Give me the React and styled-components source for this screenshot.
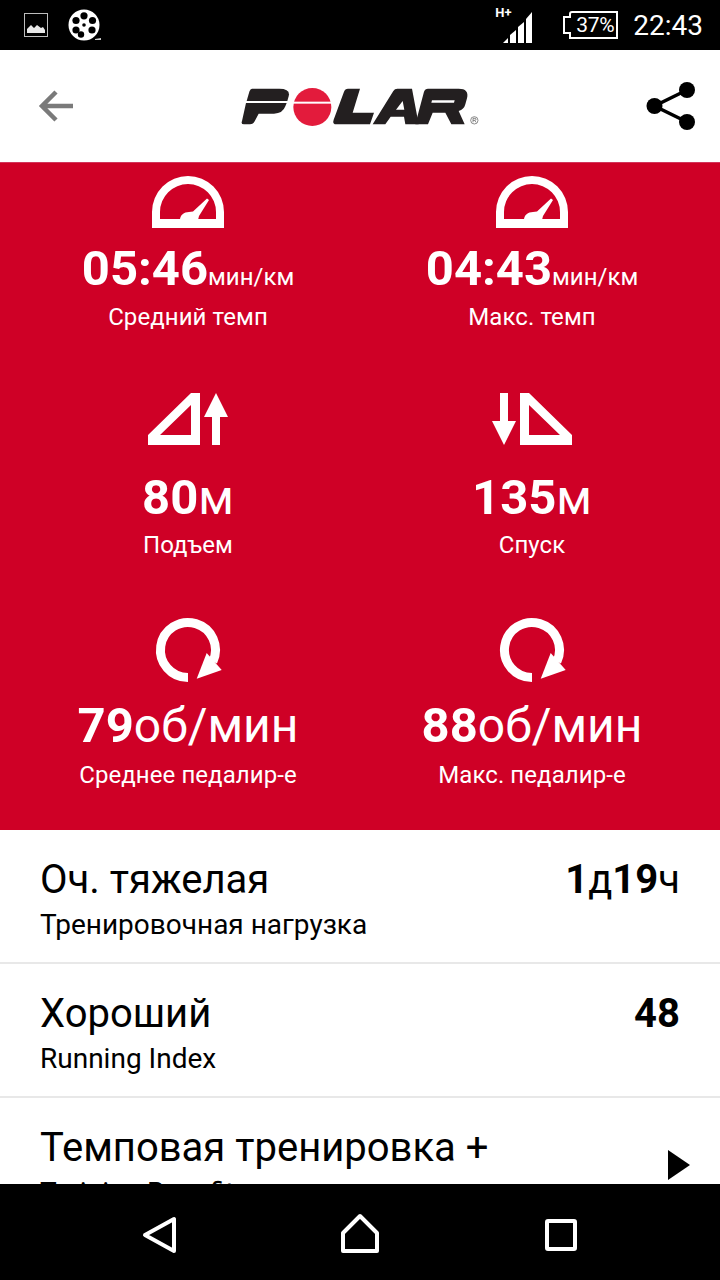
import React from "react";
import styled, { createGlobalStyle } from "styled-components";

const Global = createGlobalStyle`
  html, body { margin: 0; padding: 0; background: #fff; }
  * { box-sizing: border-box; }
`;
const Screen = styled.div`
  width: 720px; height: 1280px; display: flex; flex-direction: column;
  overflow: hidden; font-family: Roboto, "Noto Sans", sans-serif; background: #fff;
`;
const StatusBar = styled.div`
  height: 50px; flex: none; background: #000; color: #fff; display: flex; align-items: center;
  padding: 0 17px 0 24px;
`;
const StatusLeft = styled.div`display: flex; align-items: center; gap: 20px; flex: 1;`;
const Signal = styled.div`position: relative; width: 38px; height: 36px; margin-right: 30px; margin-top: -1px;`;
const NetLabel = styled.span`
  position: absolute; left: 0; top: 0; font-size: 13px; line-height: 12px; font-weight: 700;
`;
const Battery = styled.div`
  width: 55px; height: 28px; display: flex; align-items: center; justify-content: center; position: relative;
  font-size: 21px; letter-spacing: -0.3px; padding-left: 9px; margin-right: 15px; margin-top: -1px;
`;
const BatteryShape = styled.svg`position: absolute; left: 0; top: 0;`;
const BatteryText = styled.span`position: relative;`;
const Clock = styled.span`font-size: 28px; line-height: 50px; margin-top: 1px;`;

const Header = styled.div`
  height: 112px; flex: none; display: flex; align-items: center; justify-content: space-between;
  padding: 0 24px 0 38px;
`;

const RedPanel = styled.div`
  height: 668px; flex: none; background: #cf0026; color: #fff; display: grid;
  grid-template-columns: 344px 344px; grid-template-rows: 229px 228px 211px;
  padding: 1px 16px 0;
  box-shadow: inset 0 1px 0 #d3345a;
`;
const Cell = styled.div`display: flex; flex-direction: column; align-items: center;`;
const StatIcon = styled.svg`width: 96px; height: 78px; flex: none; overflow: visible; fill: #fff;`;
const Value = styled.div`
  font-size: 49px; line-height: 56px; font-weight: 700; white-space: nowrap;
`;
const Unit = styled.span`font-weight: 400; font-size: ${(p) => p.$size}px;`;
const Label = styled.div`
  font-size: 24px; line-height: 28px; letter-spacing: 0.08px; margin-top: ${(p) => p.$gap}px;
`;

const ListArea = styled.div`flex: 1; min-height: 0; overflow: hidden; background: #fff;`;
const Row = styled.div`
  height: 134px; border-bottom: 2px solid #e8e8e8; padding: 25px 40px 0; display: flex; justify-content: space-between; color: #000;
`;
const RowText = styled.div`display: flex; flex-direction: column;`;
const RowTitle = styled.div`font-size: 40px; line-height: 50px; white-space: nowrap;`;
const RowSub = styled.div`font-size: 28px; line-height: 32px; margin-top: 4px; white-space: nowrap;`;
const RowValue = styled.div`font-size: 40px; line-height: 50px; font-weight: 700; white-space: nowrap;`;
const RowUnit = styled.span`font-weight: 400;`;
const PlayIcon = styled.svg`width: 22px; height: 30px; margin: 27px -10px 0 0; flex: none;`;

const NavBar = styled.div`
  height: 96px; flex: none; background: #000; display: flex; align-items: center; justify-content: center;
`;
const NavSlot = styled.div`width: 200px; height: 96px; display: flex; align-items: center; justify-content: center;`;
const NavIcon = styled.svg`width: 60px; height: 60px; fill: none; stroke: #fff; stroke-width: 4; stroke-linejoin: round;`;

const Speedo = () => (
  <StatIcon viewBox="0 0 96 78">
    <path fillRule="evenodd" d="M12 65V49A36 36 0 0 1 84 49V65ZM20 56H76V49A28 28 0 0 0 20 49Z" />
    <path d="M40 57C40 52 44 49 49 49L53 48.5L67 35.5L69 37L59 53L58 57Z" />
  </StatIcon>
);
const Ascent = () => (
  <StatIcon viewBox="0 0 96 78">
    <path fillRule="evenodd" d="M8 53V43L51 1H60V53ZM20 43H51V13Z" />
    <path d="M76 1L88 25H80V53H72V25H64Z" />
  </StatIcon>
);
const Descent = () => (
  <StatIcon viewBox="0 0 96 78">
    <path fillRule="evenodd" d="M88 53V43L45 1H36V53ZM76 43H45V13Z" />
    <path d="M20 53L8 29H16V1H24V29H32Z" />
  </StatIcon>
);
const Cadence = () => (
  <StatIcon viewBox="0 0 96 78">
    <path d="M72.9 41.6A27.5 27.5 0 1 0 48 57.5" fill="none" stroke="#fff" strokeWidth="9" />
    <path d="M56.7 58.7L66.7 33L81.7 50Z" />
  </StatIcon>
);

const stats = [
  { Icon: Speedo, v: "05:46", u: "мин/км", s: 24, g: -2, l: "Средний темп" },
  { Icon: Speedo, v: "04:43", u: "мин/км", s: 24, g: -2, l: "Макс. темп" },
  { Icon: Ascent, v: "80", u: "м", s: 48, g: 5, l: "Подъем" },
  { Icon: Descent, v: "135", u: "м", s: 48, g: 5, l: "Спуск" },
  { Icon: Cadence, v: "79", u: "об/мин", s: 48, g: 7, l: "Среднее педалир-е" },
  { Icon: Cadence, v: "88", u: "об/мин", s: 48, g: 7, l: "Макс. педалир-е" },
];

const Logo = () => (
  <svg width="280" height="70" viewBox="0 0 840 210">
    <g fill="#231f20">
      <path d="M96 53H178Q212 53 206 76L202 90H80L88 62Q91 53 96 53Z" />
      <path d="M78 96H200L196 106Q188 128 162 128H116L104 151Q100 160 90 160H72Q62 160 66 150Z" />
      <path d="M384 53H420L398 125H462L450 160H350Q336 160 341 146L372 62Q375 53 384 53Z" />
      <path fillRule="evenodd" d="M532 53H576L596 160H556L552 137H512L496 160H458L520 60Q524 53 532 53ZM548 90L528 116H553Z" />
      <path fillRule="evenodd" d="M624 53H716Q748 53 741 82L736 100Q732 116 716 120L734 160H694L676 125H638L624 160H586L612 62Q615 53 624 53ZM636 88L634 95H702L704 88Z" />
    </g>
    <circle cx="277" cy="108" r="57" fill="#e31b3c" />
    <rect x="215" y="92" width="125" height="6" fill="#fff" />
    <circle cx="763" cy="148" r="11" fill="none" stroke="#555" strokeWidth="2" />
    <path d="M759 154V142H765Q768 142 768 145Q768 148 764 148L768 154M759 148H764" fill="none" stroke="#555" strokeWidth="2" />
  </svg>
);

export default function App() {
  return (
    <Screen>
      <Global />
      <StatusBar>
        <StatusLeft>
          <svg width="24" height="24" viewBox="0 0 24 24">
            <rect x="0.5" y="0.5" width="23" height="23" fill="none" stroke="#bdbdbd" />
            <path d="M3 20V16L7 12L10 15L13 12L17 15L19 14L21 17V20Z" fill="#e8e8e8" />
          </svg>
          <svg width="33" height="33" viewBox="0 0 33 33">
            <circle cx="16" cy="16" r="15.5" fill="#fff" />
            <g fill="#000">
              <circle cx="16" cy="6.8" r="3.6" />
              <circle cx="8" cy="11.5" r="3.6" />
              <circle cx="24.5" cy="11.5" r="3.6" />
              <circle cx="8" cy="21" r="3.6" />
              <circle cx="24" cy="21" r="3.6" />
              <circle cx="13" cy="25.5" r="3.2" />
              <circle cx="16" cy="16" r="1.8" />
            </g>
            <path d="M27 30L33 29V31H27Z" fill="#ccc" />
          </svg>
        </StatusLeft>
        <Signal>
          <NetLabel>H+</NetLabel>
          <svg width="38" height="36" viewBox="0 0 38 36" style={{ position: "absolute", left: 0, top: 0 }}>
            <g fill="#fff">
              <path d="M8 36L13 31V36Z" />
              <path d="M15 36V28L21 23V36Z" />
              <path d="M23 36V20L29 15V36Z" />
              <path d="M31 36V12L37 5V36Z" />
            </g>
          </svg>
        </Signal>
        <Battery>
          <BatteryShape width="55" height="28" viewBox="0 0 55 28">
            <path d="M9 1H54V27H7V22H1V6H7V3Q7 1 9 1Z" fill="none" stroke="#fff" strokeWidth="2" />
          </BatteryShape>
          <BatteryText>37%</BatteryText>
        </Battery>
        <Clock>22:43</Clock>
      </StatusBar>

      <Header>
        <svg width="36" height="36" viewBox="0 0 36 36">
          <path d="M35 18H5M18 4L4 18L18 32" fill="none" stroke="#7a7a7a" strokeWidth="4.5" />
        </svg>
        <Logo />
        <svg width="50" height="50" viewBox="0 0 50 50">
          <g fill="#000">
            <circle cx="8.5" cy="25" r="8" />
            <circle cx="41" cy="9" r="8" />
            <circle cx="41" cy="41" r="8" />
          </g>
          <path d="M41 9L8.5 25L41 41" fill="none" stroke="#000" strokeWidth="3.5" />
        </svg>
      </Header>

      <RedPanel>
        {stats.map(({ Icon, v, u, s, g, l }) => (
          <Cell key={l}>
            <Icon />
            <Value>{v}<Unit $size={s}>{u}</Unit></Value>
            <Label $gap={g}>{l}</Label>
          </Cell>
        ))}
      </RedPanel>

      <ListArea>
        <Row>
          <RowText>
            <RowTitle>Оч. тяжелая</RowTitle>
            <RowSub>Тренировочная нагрузка</RowSub>
          </RowText>
          <RowValue>1<RowUnit>д</RowUnit>19<RowUnit>ч</RowUnit></RowValue>
        </Row>
        <Row>
          <RowText>
            <RowTitle>Хороший</RowTitle>
            <RowSub>Running Index</RowSub>
          </RowText>
          <RowValue>48</RowValue>
        </Row>
        <Row>
          <RowText>
            <RowTitle>Темповая тренировка +</RowTitle>
            <RowSub>Training Benefit</RowSub>
          </RowText>
          <PlayIcon viewBox="0 0 22 30"><path d="M0 0L22 15L0 30Z" fill="#000" /></PlayIcon>
        </Row>
      </ListArea>

      <NavBar>
        <NavSlot>
          <NavIcon viewBox="0 0 60 60"><path d="M15 33L44 17V49Z" /></NavIcon>
        </NavSlot>
        <NavSlot>
          <NavIcon viewBox="0 0 60 60"><path d="M30 14L47 31V49H13V31Z" /></NavIcon>
        </NavSlot>
        <NavSlot>
          <NavIcon viewBox="0 0 60 60"><rect x="17" y="19" width="28" height="28" rx="1" /></NavIcon>
        </NavSlot>
      </NavBar>
    </Screen>
  );
}
